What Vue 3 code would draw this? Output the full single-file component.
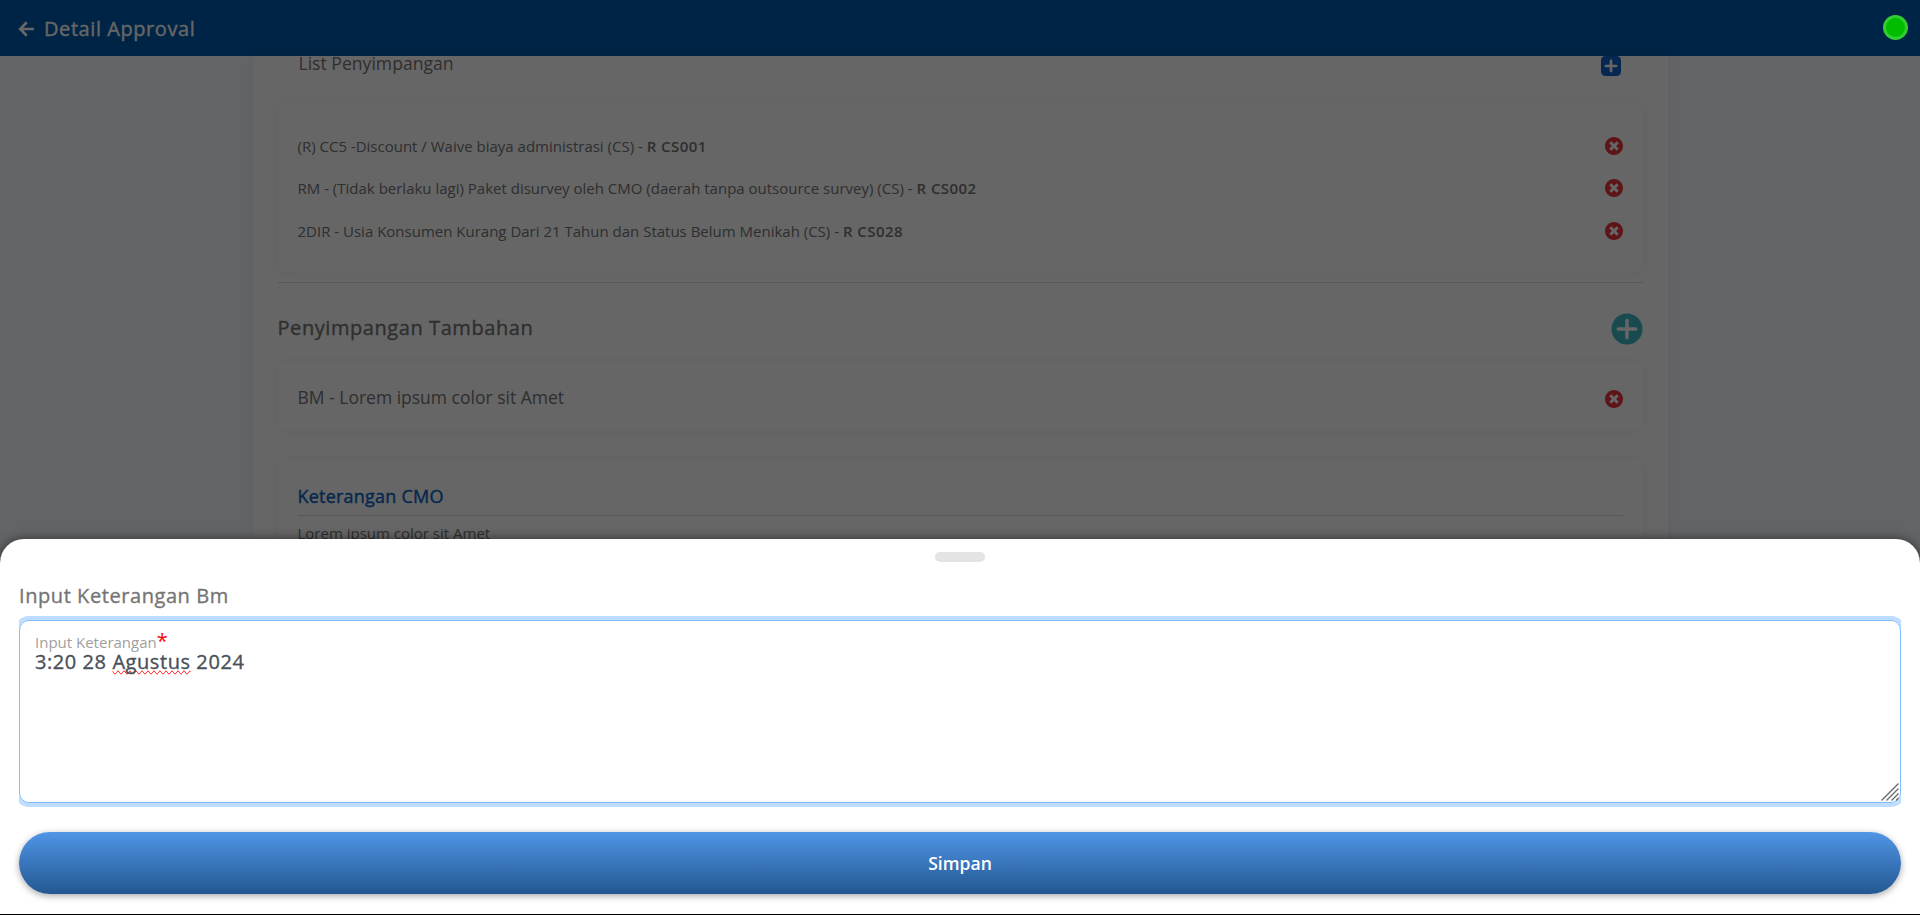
<script setup>
const deviations = [
  { text: '(R) CC5 -Discount / Waive biaya administrasi (CS) - ', code: 'R CS001' },
  { text: 'RM - (Tidak berlaku lagi) Paket disurvey oleh CMO (daerah tanpa outsource survey) (CS) - ', code: 'R CS002' },
  { text: '2DIR - Usia Konsumen Kurang Dari 21 Tahun dan Status Belum Menikah (CS) - ', code: 'R CS028' },
]
const removePath = 'M256 8C119 8 8 119 8 256s111 248 248 248 248-111 248-248S393 8 256 8zm121.600 313.100c4.700 4.700 4.700 12.300 0 17L338 377.600c-4.700 4.700-12.300 4.700-17 0L256 312l-65.100 65.600c-4.700 4.700-12.300 4.700-17 0L134.400 338c-4.700-4.700-4.700-12.300 0-17l65.600-65-65.600-65.100c-4.700-4.700-4.700-12.300 0-17l39.600-39.600c4.700-4.700 12.300-4.700 17 0l65 65.700 65.100-65.600c4.700-4.700 12.300-4.700 17 0l39.600 39.600c4.700 4.700 4.700 12.300 0 17L312 256l65.600 65.100z'
</script>

<template>
  <div class="screen">
    <header class="topbar">
      <svg class="back" viewBox="0 0 16 16"><path d="M8.300 1.200L1.700 8l6.600 6.800M2 8h13.400" fill="none" stroke="#fff" stroke-width="2.700" /></svg>
      <h1 class="medium">Detail Approval</h1>
    </header>

    <main class="panel">
      <div class="list-head">
        <span>List Penyimpangan</span>
        <svg class="add-square" viewBox="0 0 20 20">
          <rect width="20" height="20" rx="4.500" fill="#0f64c8" />
          <path d="M10 4.900v10.200M4.900 10h10.200" stroke="#fff" stroke-width="2.700" stroke-linecap="round" />
        </svg>
      </div>

      <section class="card list">
        <div v-for="d in deviations" :key="d.code" class="row">
          <p>{{ d.text }}<b>{{ d.code }}</b></p>
          <svg class="remove" viewBox="8 8 496 496"><path :d="removePath" /></svg>
        </div>
      </section>

      <hr class="divider" />

      <div class="extra-head">
        <h2 class="medium">Penyimpangan Tambahan</h2>
        <svg class="add-round" viewBox="0 0 32 32">
          <circle cx="16" cy="16" r="15.500" fill="#3cb9c8" />
          <path d="M16 7.200v17.600M7.200 16h17.600" stroke="#fff" stroke-width="3.400" stroke-linecap="round" />
        </svg>
      </div>

      <section class="card extra">
        <p>BM - Lorem ipsum color sit Amet</p>
        <svg class="remove" viewBox="8 8 496 496"><path :d="removePath" /></svg>
      </section>

      <section class="card note">
        <h3>Keterangan CMO</h3>
        <p>Lorem ipsum color sit Amet</p>
      </section>
    </main>

    <div class="backdrop"></div>
    <span class="status"></span>

    <div class="sheet">
      <span class="handle"></span>
      <h2 class="sheet-title medium">Input Keterangan Bm</h2>
      <div class="field-wrap">
        <div class="field">
          <label>Input Keterangan<sup>*</sup></label>
          <div class="value medium">3:20 28 <span class="misspelt">Agustus</span> 2024</div>
          <svg class="grip" viewBox="0 0 18 18"><path d="M0.500 17.500l17-17M5.500 17.500l12-12M10.500 17.500l7-7M15 17.500l2.500-2.500" stroke="#66666a" stroke-width="1.200" /></svg>
        </div>
      </div>
      <button class="save" type="button">Simpan</button>
    </div>
  </div>
</template>

<style>
body {
  margin: 0;
  background: #000;
}
</style>

<style scoped>
.screen {
  position: relative;
  width: 1920px;
  height: 915px;
  overflow: hidden;
  background: #f7f9fd;
  color: #757575;
  font-family: "Open Sans", "Noto Sans", sans-serif;
}
.screen * { box-sizing: border-box; }
h1, h2, h3, p { margin: 0; }
svg { display: block; flex: none; }

.medium {
  font-size: 20px;
  font-weight: 400;
  letter-spacing: 0.57px;
  -webkit-text-stroke: 0.35px currentColor;
}

.topbar {
  display: flex;
  align-items: center;
  height: 56px;
  padding: 1px 18px 0;
  background: #005aac;
  color: #fff;
}
.back { width: 17px; height: 16px; }
.topbar h1 {
  margin-left: 9px;
  line-height: 28px;
}

.panel {
  width: 1415px;
  height: 859px;
  margin: 0 auto;
  padding: 0 25px;
  background: #fff;
  box-shadow: 0 0 8px rgba(0, 0, 0, 0.05);
}
.list-head {
  display: flex;
  justify-content: space-between;
  align-items: flex-start;
  height: 47px;
  padding: 0 22px 0 21px;
  font-size: 17.6px;
  line-height: 24px;
}
.list-head span { margin-top: -5px; }
.add-square { width: 20px; height: 20px; }
.card {
  background: #fff;
  border-radius: 8px;
  box-shadow: 0 0 16px rgba(0, 0, 0, 0.05);
}
.list {
  height: 169px;
  padding: 21.3px 20px;
}
.row {
  display: flex;
  justify-content: space-between;
  align-items: center;
  height: 42.5px;
  font-size: 15px;
  line-height: 22px;
}
.row b {
  font-weight: 600;
  letter-spacing: 0.45px;
}
.remove { width: 18px; height: 18px; fill: #e8363c; }
.divider {
  height: 1px;
  margin: 10px 0 0;
  border: 0;
  background: #dadada;
}
.extra-head {
  display: flex;
  justify-content: space-between;
  align-items: center;
  height: 80px;
  padding-top: 10px;
}
.extra-head h2 { line-height: 28px; }
.add-round { width: 32px; height: 32px; margin-top: 1px; }
.extra {
  display: flex;
  justify-content: space-between;
  align-items: center;
  height: 67px;
  padding: 5px 20px 0;
  font-size: 17.5px;
}
.extra p { margin-top: -4px; }
.note {
  height: 200px;
  margin-top: 30px;
  padding: 20px;
}
.note h3 {
  height: 36px;
  border-bottom: 1px solid #dadada;
  color: #0d62c0;
  font-size: 18px;
  font-weight: 400;
  letter-spacing: 0.22px;
  line-height: 32px;
  -webkit-text-stroke: 0.4px currentColor;
}
.note p {
  margin-top: 6px;
  font-size: 15px;
  line-height: 22px;
}

.backdrop {
  position: absolute;
  inset: 0;
  background: rgba(0, 0, 0, 0.6);
}
.status {
  position: absolute;
  top: 15px;
  right: 12px;
  width: 25px;
  height: 25px;
  border: 3px solid #32cd32;
  border-radius: 50%;
  background: #00bd00;
}

.sheet {
  position: absolute;
  left: 0;
  right: 0;
  bottom: 1px;
  display: flex;
  flex-direction: column;
  height: 375px;
  padding: 13px 19px 0;
  border-radius: 24px 24px 0 0;
  background: #fff;
  box-shadow: 0 1px 12px rgba(0, 0, 0, 0.6), 0 1px 0 #000;
}
.handle {
  align-self: center;
  width: 50px;
  height: 10px;
  border-radius: 5px;
  background: #e4e4e4;
}
.sheet-title {
  margin-top: 20px;
  line-height: 28px;
}
.field-wrap {
  margin-top: 6px;
  padding: 4px 0;
  overflow: hidden;
}
.field {
  position: relative;
  height: 183px;
  padding: 12px 15px;
  border: 1px solid #80bdff;
  border-radius: 10px;
  box-shadow: 0 0 0 4px #bfdeff;
}
.field label {
  display: block;
  height: 17px;
  color: #a0a0a0;
  font-size: 15px;
  line-height: 18px;
}
.field sup {
  color: red;
  font-size: 20px;
  font-weight: 400;
  line-height: 0;
  vertical-align: 0;
}
.value {
  color: #495057;
  line-height: 24px;
}
.misspelt { text-decoration-line: spelling-error; }
.grip {
  position: absolute;
  right: 1px;
  bottom: 1px;
  width: 18px;
  height: 18px;
}
.save {
  height: 62px;
  margin-top: 25px;
  border: 0;
  border-radius: 31px;
  background: linear-gradient(#5095e7, #235790);
  box-shadow: 0 2px 7px rgba(0, 0, 0, 0.35);
  color: #fff;
  font: 600 17.6px/24px "Open Sans", "Noto Sans", sans-serif;
}
</style>
